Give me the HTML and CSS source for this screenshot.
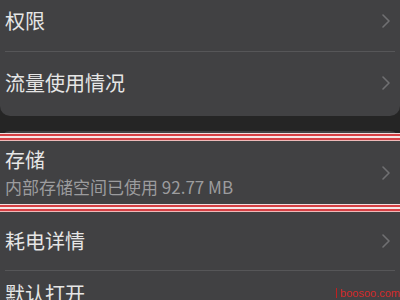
FILE: index.html
```html
<!DOCTYPE html>
<html lang="zh-CN">
<head>
<meta charset="utf-8">
<link rel="stylesheet" href="styles.css">
</head>
<body>
<div class="screen">
  <section class="card card-top">
    <div class="row row-first">
      <span class="title">权限</span>
      <svg class="chev" viewBox="0 0 8 14"><path d="M1 1 L7 7 L1 13"/></svg>
    </div>
    <div class="divider"></div>
    <div class="row">
      <span class="title">流量使用情况</span>
      <svg class="chev" viewBox="0 0 8 14"><path d="M1 1 L7 7 L1 13"/></svg>
    </div>
  </section>

  <section class="card card-bottom">
    <div class="row row-storage">
      <div class="texts">
        <span class="title">存储</span>
        <span class="sub">内部存储空间已使用 92.77 MB</span>
      </div>
      <svg class="chev" viewBox="0 0 8 14"><path d="M1 1 L7 7 L1 13"/></svg>
      <div class="mark"></div>
    </div>
    <div class="row row-power">
      <span class="title">耗电详情</span>
      <svg class="chev" viewBox="0 0 8 14"><path d="M1 1 L7 7 L1 13"/></svg>
    </div>
    <div class="divider"></div>
    <div class="row row-last">
      <span class="title">默认打开</span>
    </div>
  </section>
  <div class="watermark"><span class="wbar"></span>boosoo.com</div>
</div>
</body>
</html>
```
FILE: styles.css
```css
html, body {
  margin: 0;
  padding: 0;
  background: #252525;
}
.screen {
  position: relative;
  width: 400px;
  height: 300px;
  overflow: hidden;
  font-family: "Noto Sans CJK SC", "Noto Sans", sans-serif;
}
.card {
  background: #414143;
  border-radius: 10px;
}
.card-top {
  margin-top: -9px;
  padding-bottom: 3px;
}
.card-bottom {
  margin-top: 15px;
}
.row {
  position: relative;
  display: flex;
  align-items: center;
  justify-content: space-between;
  height: 61px;
  padding: 0 10px 0 5px;
}
.row-first {
  height: 60px;
}
.title {
  color: #e6e6e6;
  font-size: 20px;
  line-height: 24px;
}
.sub {
  color: #9c9c9e;
  font-size: 17px;
  line-height: 22px;
}
.texts {
  display: flex;
  flex-direction: column;
  gap: 4px;
}
.row-storage {
  height: 80px;
  padding-top: 3px;
  box-sizing: border-box;
}
.row-power {
  height: 59px;
  padding-top: 1px;
  box-sizing: border-box;
}
.row-last {
  height: 40px;
  align-items: flex-start;
  padding-top: 11px;
}
.chev {
  width: 8px;
  height: 14px;
  fill: none;
  stroke: #707072;
  stroke-width: 1.6;
  stroke-linecap: round;
  stroke-linejoin: round;
}
.divider {
  height: 1px;
  margin: 0 5px;
  background: #565658;
}
.mark {
  position: absolute;
  left: 0;
  right: 0;
  top: 2px;
  bottom: 0;
  pointer-events: none;
}
.mark::before,
.mark::after {
  content: "";
  position: absolute;
  left: 0;
  right: 0;
  height: 8px;
  background: linear-gradient(
    to bottom,
    #f3dede 0, #f3dede 1px,
    #d63f44 1px, #d63f44 3px,
    #f7e6e6 3px, #f7e6e6 5px,
    #d63f44 5px, #d63f44 7px,
    #eeb8b8 7px, #eeb8b8 8px
  );
}
.mark::before {
  top: 0;
}
.mark::after {
  top: 71px;
}
.watermark {
  position: absolute;
  right: 0;
  top: 287px;
  color: #d42a2a;
  font-family: "Liberation Sans", sans-serif;
  font-size: 11px;
  line-height: 12px;
  display: flex;
  align-items: center;
  gap: 3px;
}
.wbar {
  display: inline-block;
  width: 1px;
  height: 10px;
  background: #c02020;
}
```
